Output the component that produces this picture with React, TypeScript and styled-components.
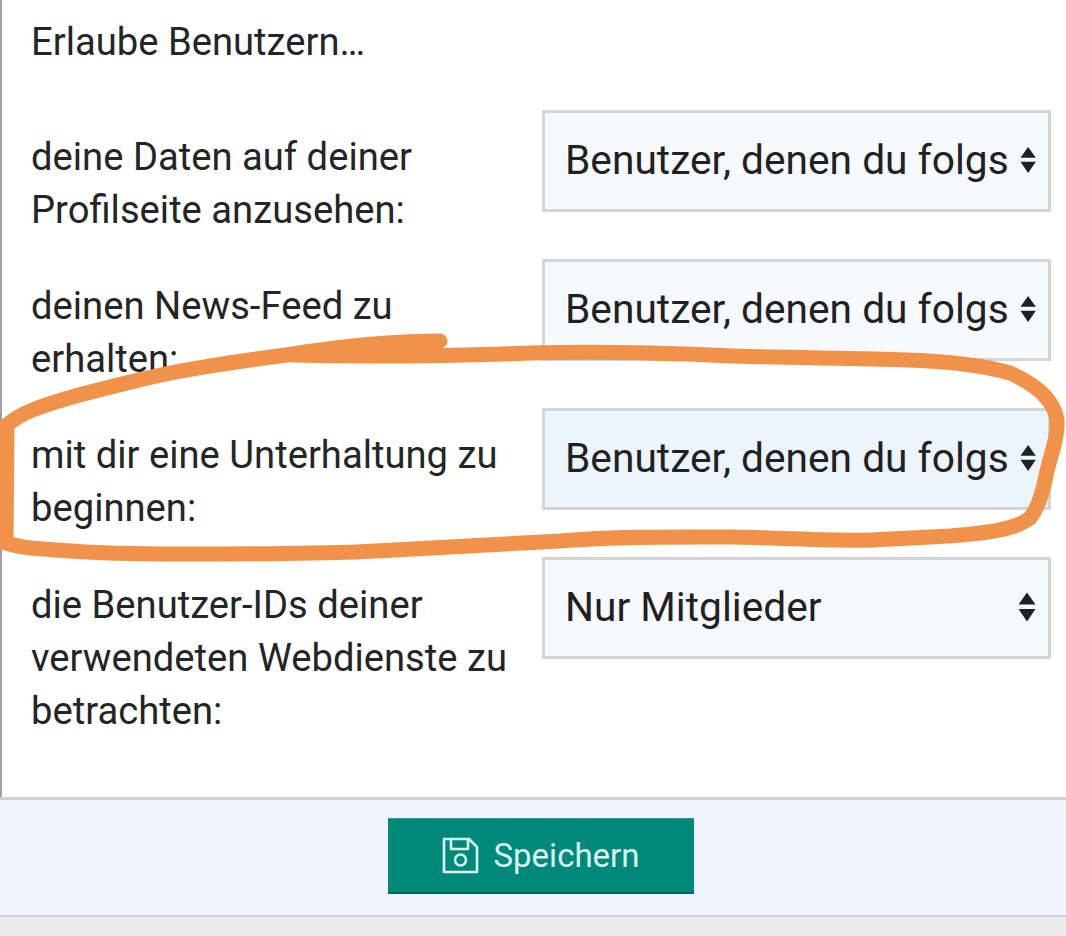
import React from "react";
import styled, { createGlobalStyle } from "styled-components";

const Global = createGlobalStyle`
  html, body { margin: 0; padding: 0; background: #fff; }
  body { font-family: Roboto, "Liberation Sans", sans-serif; color: #212325; }
`;

const Page = styled.div`
  position: relative;
  width: 1066px;
  height: 936px;
  overflow: hidden;
  display: flex;
  flex-direction: column;
  background: #ebebeb;
`;

const Panel = styled.section`
  height: 797px;
  box-sizing: border-box;
  padding: 15px 15px 0 29px;
  background: #fff;
  border-left: 2px solid #a0a0a0;
`;

const Intro = styled.p`
  margin: 0 0 41px;
  height: 54px;
  font-size: 38.2px;
  line-height: 54px;
  color: #232527;
`;

const Rows = styled.div`
  display: flex;
  flex-direction: column;
  gap: 47px;
`;

const Row = styled.div`
  display: grid;
  grid-template-columns: 511px 509px;
  height: 102px;
`;

const Label = styled.label<{ $long?: boolean }>`
  padding-top: ${(p) => (p.$long ? "22px" : "21px")};
  font-size: 38.2px;
  line-height: 53px;
  color: #232527;
`;

const SelectBox = styled.div<{ $active?: boolean }>`
  box-sizing: border-box;
  height: 102px;
  display: flex;
  align-items: center;
  gap: 11px;
  padding: 0 12px 2px 20px;
  border: 3px solid #d3d5d6;
  background: ${(p) => (p.$active ? "#ecf4fc" : "#f6fafe")};
  font-size: 40.7px;
  color: #1f2123;
`;

const SelectText = styled.span`
  flex: 1;
  white-space: nowrap;
`;

const Footer = styled.footer`
  box-sizing: border-box;
  height: 120px;
  display: flex;
  align-items: center;
  justify-content: center;
  background: #edf4fc;
  border-top: 3px solid #cfd1d2;
  border-bottom: 2px solid #cfd1d2;
  padding: 0 0 3px 16px;
`;

const SaveButton = styled.button`
  width: 306px;
  height: 76px;
  display: flex;
  align-items: center;
  justify-content: center;
  gap: 14px;
  padding: 0;
  border: 0;
  border-top: 1px solid #2a9d8f;
  border-bottom: 2px solid #00695c;
  background: #00887a;
  color: #d6f5ee;
  font-family: inherit;
  font-size: 33px;
`;

const Scribble = styled.svg`
  position: absolute;
  left: 0;
  top: 0;
  pointer-events: none;
`;

const Arrows = () => (
  <svg width="18" height="30" viewBox="0 0 18 30" aria-hidden="true">
    <path d="M9 0.5 L17.5 12.5 H0.5 Z M0.5 17 H17.5 L9 29.5 Z" fill="#1f2123" />
  </svg>
);

const SaveIcon = () => (
  <svg width="37" height="37" viewBox="0 0 37 37" fill="none" stroke="currentColor" strokeWidth="2.6" strokeLinejoin="round" aria-hidden="true">
    <path d="M2 2 H27 L35 10 V35 H2 Z" />
    <path d="M9 2 V12 H26 V2" />
    <circle cx="18.5" cy="23" r="5.5" />
  </svg>
);

const rows = [
  { label: <>deine Daten auf deiner<br />Profilseite anzusehen:</>, value: "Benutzer, denen du folgs" },
  { label: <>deinen News-Feed zu<br />erhalten:</>, value: "Benutzer, denen du folgs" },
  { label: <>mit dir eine Unterhaltung zu<br />beginnen:</>, value: "Benutzer, denen du folgs", active: true },
  { label: <>die Benutzer-IDs deiner<br />verwendeten Webdienste zu<br />betrachten:</>, value: "Nur Mitglieder", long: true },
];

export default function App() {
  return (
    <Page>
      <Global />
      <Panel>
        <Intro>Erlaube Benutzern…</Intro>
        <Rows>
          {rows.map((r, i) => (
            <Row key={i}>
              <Label $long={r.long}>{r.label}</Label>
              <SelectBox $active={r.active}>
                <SelectText>{r.value}</SelectText>
                <Arrows />
              </SelectBox>
            </Row>
          ))}
        </Rows>
      </Panel>
      <Footer>
        <SaveButton>
          <SaveIcon />
          Speichern
        </SaveButton>
      </Footer>
      <Scribble width="1066" height="936" viewBox="0 0 1066 936" aria-hidden="true">
        <path
          d="M440 341 C390 341 335 347 286 355 C235 362 190 368 143 379 C110 387 85 393 65 399 C42 406 22 412 7 425 L6 543 C25 549 45 549 71 551 C110 554 140 554 178 554 C240 554 300 554 357 552 C430 548 490 545 560 541 C620 536 680 537 735 537 C790 538 830 541 872 540 C900 539 925 537 950 536 C985 533 1015 530 1030 518 C1038 508 1042 495 1045 480 C1050 455 1058 440 1057 420 C1054 400 1037 385 1010 373 C978 364 945 361 906 360 C860 358 790 358 735 356 C670 353 600 351 530 353 C450 356 370 357 293 355"
          fill="none"
          stroke="#f09249"
          strokeWidth="15"
          strokeLinecap="round"
          strokeLinejoin="round"
        />
      </Scribble>
    </Page>
  );
}
